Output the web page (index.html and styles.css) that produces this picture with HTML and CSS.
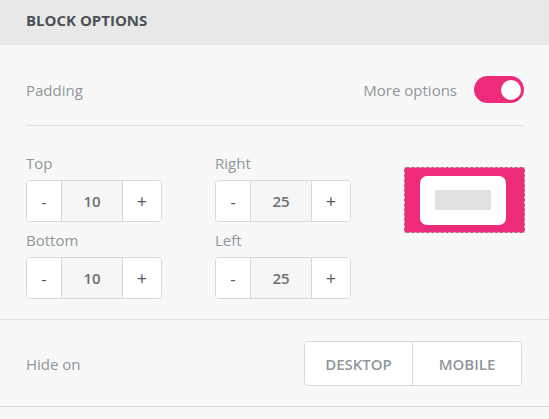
FILE: index.html
```html
<!DOCTYPE html>
<html lang="en">
<head>
    <meta charset="UTF-8">
    <meta name="viewport" content="width=device-width, initial-scale=1.0">
    <title>Block Options</title>
    <link rel="stylesheet" href="styles.css">
</head>
<body>

    <div class="panel">
        <div class="panel-head">
            <h2>BLOCK OPTIONS</h2>
        </div>

        <div class="panel-body">
            <div class="padding-row">
                <span class="label">Padding</span>
                <div class="more">
                    <span class="label">More options</span>
                    <span class="toggle on"><span class="knob"></span></span>
                </div>
            </div>

            <div class="spacing">
                <div class="col">
                    <div class="field">
                        <span class="label">Top</span>
                        <div class="stepper">
                            <button class="minus">-</button>
                            <span class="value">10</span>
                            <button class="plus">+</button>
                        </div>
                    </div>
                    <div class="field">
                        <span class="label">Bottom</span>
                        <div class="stepper">
                            <button class="minus">-</button>
                            <span class="value">10</span>
                            <button class="plus">+</button>
                        </div>
                    </div>
                </div>

                <div class="col">
                    <div class="field">
                        <span class="label">Right</span>
                        <div class="stepper">
                            <button class="minus">-</button>
                            <span class="value">25</span>
                            <button class="plus">+</button>
                        </div>
                    </div>
                    <div class="field">
                        <span class="label">Left</span>
                        <div class="stepper">
                            <button class="minus">-</button>
                            <span class="value">25</span>
                            <button class="plus">+</button>
                        </div>
                    </div>
                </div>

                <div class="preview">
                    <div class="preview-box">
                        <div class="preview-content"></div>
                    </div>
                </div>
            </div>
        </div>

        <div class="hide-row">
            <span class="label">Hide on</span>
            <div class="segmented">
                <button>DESKTOP</button>
                <button>MOBILE</button>
            </div>
        </div>
    </div>

</body>
</html>
```

FILE: styles.css
```css
body {
    font-family: "Open Sans", Arial, sans-serif;
    margin: 0;
    background-color: #f7f7f7;
}
.panel {
    width: 549px;
    background-color: #f8f8f8;
}
.panel-head {
    height: 45px;
    background-color: #e9e9e9;
    display: flex;
    align-items: center;
    padding-left: 26px;
}
.panel-head h2 {
    margin: 0;
    font-size: 15px;
    font-weight: 700;
    color: #4b5257;
    margin-top: -6px;
}
.panel-body {
    padding: 0 25px 0 26px;
}
.label {
    font-size: 15px;
    color: #8e979b;
    line-height: 20px;
}
.padding-row {
    display: flex;
    justify-content: space-between;
    align-items: center;
    padding: 31px 0 22px;
    border-bottom: 1px solid #e1e1e1;
}
.more {
    display: flex;
    align-items: center;
    gap: 17px;
}
.toggle {
    width: 50px;
    height: 27px;
    border-radius: 14px;
    background-color: #ee2a7b;
    display: flex;
    align-items: center;
    justify-content: flex-end;
    padding-right: 3px;
    box-sizing: border-box;
}
.knob {
    width: 20px;
    height: 20px;
    border-radius: 50%;
    background-color: white;
}
.spacing {
    display: flex;
    gap: 53px;
    padding: 27px 0 20px;
}
.col {
    display: flex;
    flex-direction: column;
    gap: 8px;
}
.field {
    display: flex;
    flex-direction: column;
    gap: 7px;
}
.stepper {
    display: flex;
    width: 136px;
    height: 42px;
    border: 1px solid #d9d9d9;
    border-radius: 4px;
    box-sizing: border-box;
    overflow: hidden;
    background-color: white;
}
.stepper button {
    border: none;
    background-color: white;
    font-family: inherit;
    font-size: 17px;
    color: #555b5f;
    padding: 0;
    cursor: pointer;
}
.stepper .minus {
    width: 35px;
    border-right: 1px solid #d9d9d9;
}
.stepper .plus {
    width: 39px;
    border-left: 1px solid #d9d9d9;
    font-size: 18px;
}
.stepper .value {
    flex: 1;
    display: flex;
    align-items: center;
    justify-content: center;
    background-color: #f6f6f6;
    font-size: 15px;
    font-weight: 600;
    color: #6b7175;
}
.preview {
    padding-top: 14px;
}
.preview-box {
    width: 121px;
    height: 66px;
    box-sizing: border-box;
    background-color: #ee2a7b;
    border: 1px dashed #b9bcbe;
    display: flex;
    align-items: center;
    justify-content: center;
    padding-right: 3px;
}
.preview-content {
    width: 86px;
    height: 49px;
    box-sizing: border-box;
    background-color: white;
    border-radius: 7px;
    display: flex;
    justify-content: center;
    align-items: center;
}
.preview-content::before {
    content: "";
    width: 56px;
    height: 20px;
    background-color: #e1e1e1;
}
.hide-row {
    display: flex;
    justify-content: space-between;
    align-items: center;
    padding: 21px 27px 20px 26px;
    border-top: 1px solid #e1e1e1;
    border-bottom: 1px solid #d9d9d9;
}
.segmented {
    display: flex;
    border: 1px solid #d9d9d9;
    border-radius: 4px;
    overflow: hidden;
    background-color: white;
}
.segmented button {
    height: 43px;
    border: none;
    background-color: white;
    font-family: inherit;
    font-size: 15px;
    font-weight: 600;
    color: #8e979b;
    padding: 0;
    cursor: pointer;
}
.segmented button:first-child {
    width: 108px;
    border-right: 1px solid #d9d9d9;
}
.segmented button:last-child {
    width: 108px;
}
```
